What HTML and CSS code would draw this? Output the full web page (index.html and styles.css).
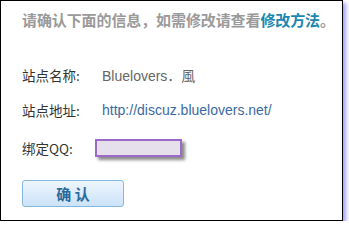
FILE: index.html
```html
<!DOCTYPE html>
<html>
<head>
<meta charset="utf-8">
<link rel="stylesheet" href="styles.css">
</head>
<body>
<div class="box">
  <div class="head">请确认下面的信息，如需修改请查看<a class="link">修改方法</a>。</div>
  <div class="rows">
    <div class="row"><span class="label">站点名称:</span><span class="val gray">Bluelovers．風</span></div>
    <div class="row"><span class="label">站点地址:</span><span class="val url">http://discuz.bluelovers.net/</span></div>
    <div class="row qq"><span class="label">绑定QQ:</span><span class="input"></span></div>
  </div>
  <div class="btn">确 认</div>
</div>
</body>
</html>
```
FILE: styles.css
```css
html, body { margin: 0; padding: 0; background: #fff; }
body { font-family: "Liberation Sans", "Noto Sans CJK SC", sans-serif; }
.box {
  width: 320px;
  height: 219px;
  border: 1px solid #000;
  box-shadow: 3px 3px 4px rgba(110, 110, 255, 0.65);
  padding-left: 21px;
  box-sizing: content-box;
}
.head {
  margin-top: 9px;
  line-height: 20px;
  font-size: 15px;
  font-weight: bold;
  color: #9a9a9a;
  font-family: "Noto Sans CJK SC", sans-serif;
  letter-spacing: -0.1px;
}
.link { color: #1a87b2; }
.rows { display: flex; flex-direction: column; gap: 15px; margin-top: 35px; }
.row { display: flex; align-items: center; height: 20px; font-size: 14px; color: #333; }
.row.qq { margin-top: 3px; }
.label { width: 73px; font-family: "Noto Sans CJK SC", sans-serif; font-size: 13.5px; }
.val { padding-left: 7px; }
.gray { color: #666; }
.url { color: #3a6aa3; }
.input {
  width: 83px;
  height: 14px;
  border: 2px solid #9c6bc9;
  background: #e6e0ec;
  box-shadow: 3px 3px 3px #8a8a8a;
}
.btn {
  margin-top: 22px;
  width: 100px;
  height: 25px;
  border: 1px solid #86b7dc;
  border-radius: 3px;
  background: linear-gradient(#eef6fe, #cbe2f8);
  color: #2a6a9c;
  font-weight: bold;
  font-size: 15px;
  font-family: "Noto Sans CJK SC", sans-serif;
  display: flex;
  align-items: center;
  justify-content: center;
}
```
